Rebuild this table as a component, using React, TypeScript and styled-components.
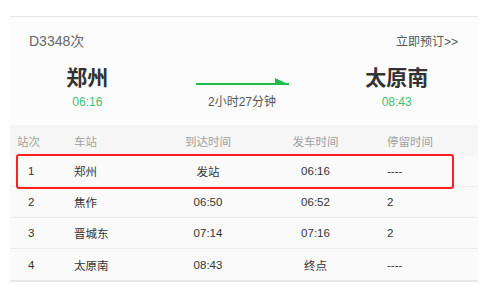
import React from "react";
import styled, { createGlobalStyle } from "styled-components";

const Global = createGlobalStyle`
  html, body { margin: 0; padding: 0; background: #ffffff; }
  body { font-family: "Liberation Sans", "Noto Sans CJK SC", sans-serif; }
`;

const Panel = styled.div`
  margin: 16px 0 0 10px;
  width: 468px;
  border-top: 1px solid #e6e6e6;
  background: #fcfcfc;
`;

const Summary = styled.div`
  padding: 13px 20px 15px 19px;
`;

const TitleRow = styled.div`
  display: flex;
  justify-content: space-between;
  align-items: center;
  height: 20px;
`;

const TrainNo = styled.span`
  font-size: 14px;
  color: #666;
`;

const BookLink = styled.a`
  font-size: 12px;
  color: #555;
  text-decoration: none;
`;

const Route = styled.div`
  display: grid;
  grid-template-columns: 1fr 1fr 1fr;
  margin: 12px -20px 0 -19px;
  padding-right: 4px;
`;

const Stop = styled.div`
  display: flex;
  flex-direction: column;
  align-items: center;
`;

const StopName = styled.div`
  font-family: "Noto Sans CJK SC", sans-serif;
  font-size: 21px;
  font-weight: 700;
  line-height: 28px;
  color: #333;
`;

const StopTime = styled.div`
  margin-top: 4px;
  font-size: 12px;
  line-height: 16px;
  color: #3cc172;
`;

const Middle = styled.div`
  display: flex;
  flex-direction: column;
  align-items: center;
  padding-top: 15px;
`;

const Arrow = styled.svg`
  display: block;
  margin-left: 3px;
`;

const Duration = styled.div`
  margin-top: 9px;
  font-size: 12px;
  line-height: 16px;
  color: #555;
`;

const Table = styled.div`
  border-bottom: 2px solid #e8e8e8;
`;

const Row = styled.div<{ $head?: boolean }>`
  position: relative;
  display: grid;
  grid-template-columns: 64px 86px 96px 119px 1fr;
  align-items: center;
  height: 31px;
  box-sizing: border-box;
  background: ${(p) => (p.$head ? "#f6f6f6" : "#fafafa")};
  border-bottom: ${(p) => (p.$head ? "none" : "1px solid #ececec")};
  font-size: 11.5px;
  color: ${(p) => (p.$head ? "#a0a0a0" : "#333")};
  &:last-child { border-bottom: none; }
`;

const Cell = styled.div<{ $align?: "left" | "center"; $pad?: number }>`
  text-align: ${(p) => p.$align ?? "left"};
  padding-left: ${(p) => p.$pad ?? 0}px;
  white-space: nowrap;
`;

const Highlight = styled.div`
  position: absolute;
  z-index: 2;
  left: 6px;
  right: 24px;
  top: -2px;
  bottom: -3px;
  border: 2px solid #ff1f1f;
  border-radius: 3px;
  pointer-events: none;
`;

const stops = [
  { no: "1", name: "郑州", arr: "发站", dep: "06:16", stay: "----" },
  { no: "2", name: "焦作", arr: "06:50", dep: "06:52", stay: "2" },
  { no: "3", name: "晋城东", arr: "07:14", dep: "07:16", stay: "2" },
  { no: "4", name: "太原南", arr: "08:43", dep: "终点", stay: "----" },
];

export default function App() {
  return (
    <>
      <Global />
      <Panel>
        <Summary>
          <TitleRow>
            <TrainNo>D3348次</TrainNo>
            <BookLink href="#">立即预订&gt;&gt;</BookLink>
          </TitleRow>
          <Route>
            <Stop>
              <StopName>郑州</StopName>
              <StopTime>06:16</StopTime>
            </Stop>
            <Middle>
              <Arrow width="94" height="8" viewBox="0 0 94 8">
                <rect x="0" y="6" width="93" height="2" fill="#1cbb4a" />
                <polygon points="79,1 79,8 94,8" fill="#1cbb4a" />
              </Arrow>
              <Duration>2小时27分钟</Duration>
            </Middle>
            <Stop>
              <StopName>太原南</StopName>
              <StopTime>08:43</StopTime>
            </Stop>
          </Route>
        </Summary>
        <Table>
          <Row $head>
            <Cell $pad={7}>站次</Cell>
            <Cell>车站</Cell>
            <Cell $align="center">到达时间</Cell>
            <Cell $align="center">发车时间</Cell>
            <Cell $pad={12}>停留时间</Cell>
          </Row>
          {stops.map((s, i) => (
            <Row key={s.no}>
              <Cell $pad={18}>{s.no}</Cell>
              <Cell>{s.name}</Cell>
              <Cell $align="center">{s.arr}</Cell>
              <Cell $align="center">{s.dep}</Cell>
              <Cell $pad={12}>{s.stay}</Cell>
              {i === 0 && <Highlight />}
            </Row>
          ))}
        </Table>
      </Panel>
    </>
  );
}
